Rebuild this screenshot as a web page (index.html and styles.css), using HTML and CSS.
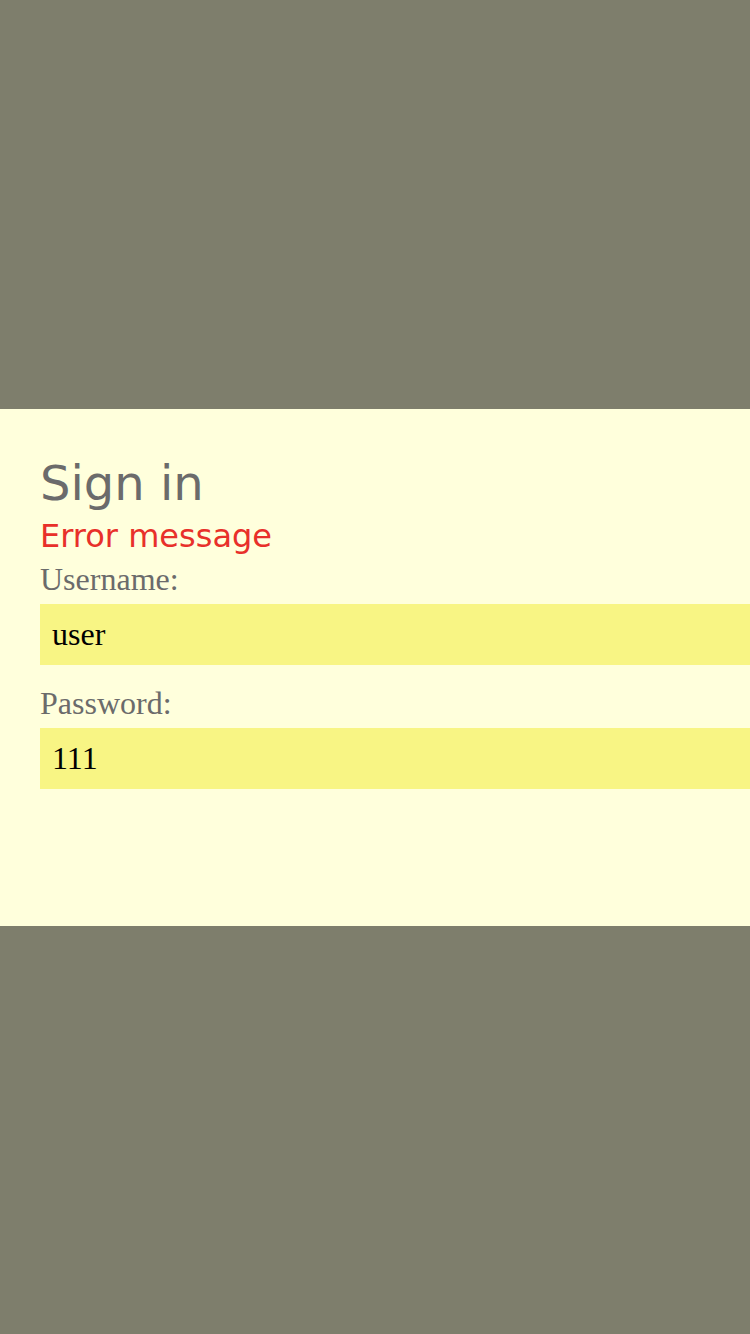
FILE: index.html
```html
<!DOCTYPE html>
<html lang="en">
<head>
<meta charset="utf-8">
<title>Sign in</title>
<link rel="stylesheet" href="styles.css">
</head>
<body>
<main class="screen">
  <form class="panel">
    <h1 class="title">Sign in</h1>
    <p class="error">Error message</p>
    <label class="label" for="username">Username:</label>
    <input class="field" id="username" type="text" value="user">
    <label class="label" for="password">Password:</label>
    <input class="field" id="password" type="text" value="111">
  </form>
</main>
</body>
</html>
```
FILE: styles.css
```css
html, body {
  margin: 0;
  padding: 0;
  height: 100%;
}
body {
  background: #7e7e6c;
}
.screen {
  height: 100vh;
  display: flex;
  flex-direction: column;
  justify-content: center;
  padding-top: 1px;
  box-sizing: border-box;
}
.panel {
  background: #ffffdc;
  padding: 46px 0 137px 40px;
  display: flex;
  flex-direction: column;
  overflow: hidden;
}
.title {
  margin: 0 0 7px;
  font-family: "DejaVu Sans", Verdana, sans-serif;
  font-weight: normal;
  font-size: 48px;
  line-height: 56px;
  color: #6b6b6b;
}
.error {
  margin: 0 0 6px;
  font-family: "DejaVu Sans", Verdana, sans-serif;
  font-size: 32px;
  line-height: 37px;
  color: #e8302a;
}
.label {
  display: block;
  margin: 0 0 7px;
  font-family: "Liberation Serif", "Times New Roman", serif;
  font-size: 32px;
  line-height: 36px;
  color: #6b6b6b;
}
.field {
  display: block;
  box-sizing: border-box;
  width: 100%;
  height: 61px;
  margin: 0 0 20px;
  padding: 0 12px;
  border: none;
  outline: none;
  background: #f8f584;
  font-family: "Liberation Serif", "Times New Roman", serif;
  font-size: 32px;
  color: #000;
}
.field:last-child {
  margin-bottom: 0;
}
```
